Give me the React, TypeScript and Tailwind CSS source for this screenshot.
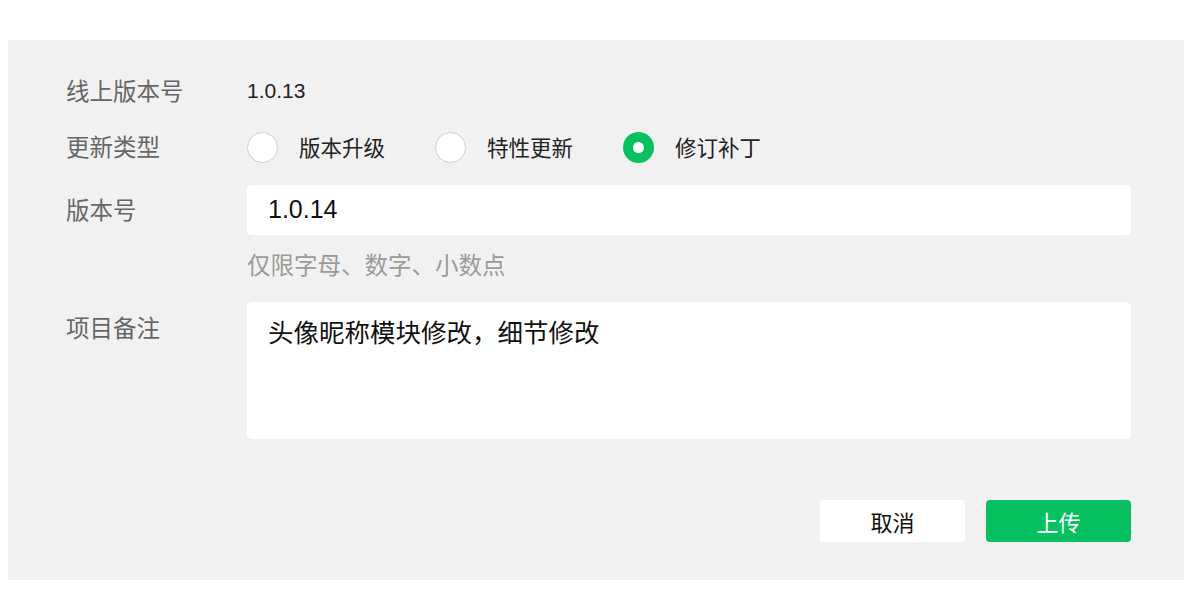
const font = { fontFamily: '"Noto Sans CJK SC", "Noto Sans", sans-serif' };

function Radio({ label, checked }: { label: string; checked?: boolean }) {
  return (
    <div className="flex items-center">
      {checked ? (
        <span className="w-[31px] h-[31px] rounded-full bg-[#07c160] flex items-center justify-center">
          <span className="w-[11px] h-[11px] rounded-full bg-white" />
        </span>
      ) : (
        <span className="w-[31px] h-[31px] rounded-full bg-white border border-[#cfcfcf]" />
      )}
      <span className="ml-[21px] text-[21.5px] leading-[30px] text-[#222]">{label}</span>
    </div>
  );
}

export default function App() {
  return (
    <div className="w-[1193px] h-[600px] bg-white pt-[40px] pl-[8px]" style={font}>
      <div className="w-[1176px] h-[540px] bg-[#f1f1f1] pl-[58px] pr-[53px] pt-[36px] flex flex-col">
        {/* 线上版本号 */}
        <div className="flex items-center h-[30px]">
          <div className="w-[181px] text-[23.5px] text-[#666]">线上版本号</div>
          <div className="text-[21px] text-[#222]" style={{ fontFamily: '"Liberation Sans", Arial, sans-serif' }}>1.0.13</div>
        </div>

        {/* 更新类型 */}
        <div className="flex items-center h-[32px] mt-[25px]">
          <div className="w-[181px] text-[23.5px] text-[#666]">更新类型</div>
          <div className="flex items-center">
            <div className="w-[188px]"><Radio label="版本升级" /></div>
            <div className="w-[188px]"><Radio label="特性更新" /></div>
            <Radio label="修订补丁" checked />
          </div>
        </div>

        {/* 版本号 */}
        <div className="flex items-center mt-[22px]">
          <div className="w-[181px] text-[23.5px] text-[#666]">版本号</div>
          <div className="flex-1 h-[50px] bg-white rounded-[5px] flex items-center pl-[21px] text-[25px] text-[#111]" style={{ fontFamily: '"Liberation Sans", Arial, sans-serif' }}>
            1.0.14
          </div>
        </div>
        <div className="ml-[181px] mt-[16px] h-[26px] text-[23.5px] leading-[26px] text-[#9a9a9a]">仅限字母、数字、小数点</div>

        {/* 项目备注 */}
        <div className="flex items-start mt-[25px]">
          <div className="w-[181px] mt-[10px] text-[23.5px] leading-[30px] text-[#666]">项目备注</div>
          <div className="flex-1 h-[137px] bg-white rounded-[5px] pl-[21px] pt-[14px] text-[25.5px] leading-[30px] text-[#111]">
            头像昵称模块修改，细节修改
          </div>
        </div>

        {/* 按钮 */}
        <div className="flex justify-end gap-[21px] mt-[61px]">
          <button className="w-[145px] h-[42px] bg-white rounded-[4px] text-[22px] text-[#111]">取消</button>
          <button className="w-[145px] h-[42px] bg-[#07c160] rounded-[4px] text-[22px] text-white">上传</button>
        </div>
      </div>
    </div>
  );
}
